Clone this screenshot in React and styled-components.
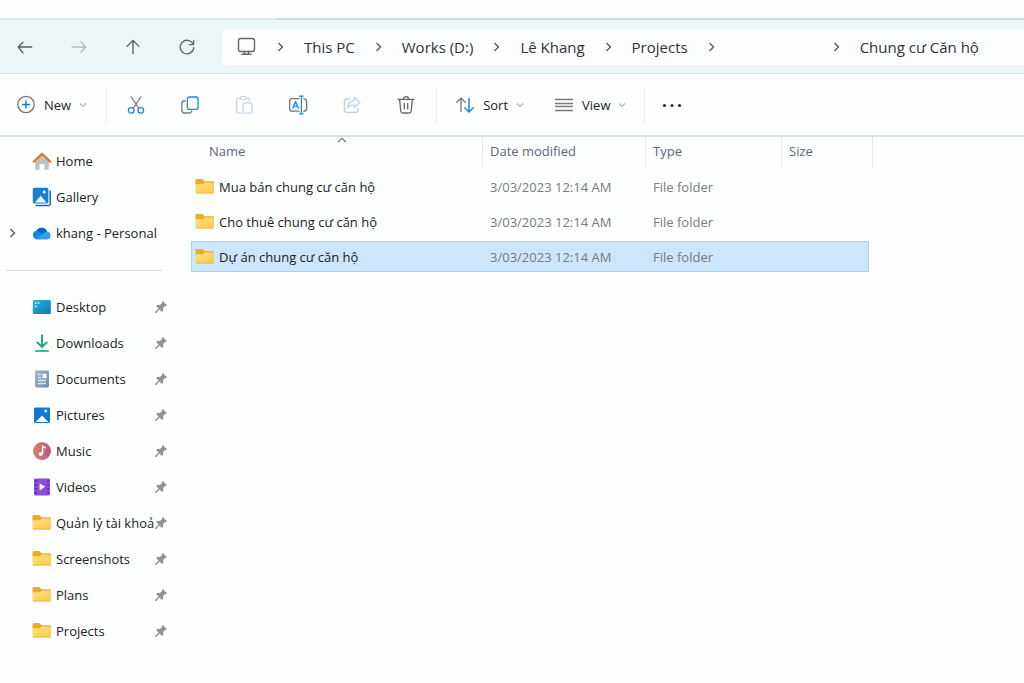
import React from 'react'
import styled, { createGlobalStyle, css } from 'styled-components'

const crumbs = ['This PC', 'Works (D:)', 'Lê Khang', 'Projects', '', 'Chung cư Căn hộ']

const files = [
    { name: 'Mua bán chung cư căn hộ', date: '3/03/2023 12:14 AM', type: 'File folder' },
    { name: 'Cho thuê chung cư căn hộ', date: '3/03/2023 12:14 AM', type: 'File folder' },
    { name: 'Dự án chung cư căn hộ', date: '3/03/2023 12:14 AM', type: 'File folder', selected: true },
]

/* ---------- icons ---------- */

const Line = ({ size = 20, children, ...rest }) => (
    <svg width={size} height={size} viewBox='0 0 20 20' fill='none' stroke='#5a5a5a' strokeWidth='1.3'
        strokeLinecap='round' strokeLinejoin='round' aria-hidden='true' {...rest}>
        {children}
    </svg>
)

const BackIcon = () => <Line><path d='M16.800 10H3.500M8 5.200 3.200 10 8 15.800' /></Line>
const ForwardIcon = () => <Line stroke='#b3bcbe'><path d='M3 10h13.500M12 5l4.800 5-4.800 5.200' /></Line>
const UpIcon = () => <Line><path d='M10 16.500V3.800M4 9.400l6-6 6 6' /></Line>
const RefreshIcon = () => <Line stroke='#666'><path d='M16 6.800A6.800 6.800 0 1 0 16.800 10.600M16.600 3.400v4.200h-4.300' /></Line>

const MonitorIcon = () => (
    <Line stroke='#666' strokeWidth='1.4'>
        <rect x='1.5' y='1.5' width='16' height='13' rx='2.2' />
        <path d='M7.500 14.500v2.400M11.500 14.500v2.400M5 17.300h9' />
    </Line>
)

const ChevronRight = () => (
    <svg width='11' height='12' viewBox='0 0 11 12' fill='none' stroke='#5c5c5c' strokeWidth='1.4' aria-hidden='true'>
        <path d='M3.500 2 7.500 6l-4 4' />
    </svg>
)

const CaretDown = () => (
    <svg width='8' height='6' viewBox='0 0 8 6' fill='none' stroke='#a8a8a8' strokeWidth='1.1' aria-hidden='true'>
        <path d='M1 1.500 4 4.300l3-2.800' />
    </svg>
)

const NewIcon = () => (
    <Line>
        <circle cx='10' cy='9.500' r='8.2' stroke='#707070' />
        <path d='M10 6v7M6.500 9.500h7' stroke='#1a7fd4' strokeWidth='1.500' />
    </Line>
)

const CutIcon = () => (
    <Line>
        <path d='M5.200 1.800 12.600 13.200' stroke='#8d7f80' />
        <path d='M14.800 1.800 7.400 13.200' stroke='#8d7f80' />
        <circle cx='5.200' cy='15.400' r='2.800' stroke='#2088d8' />
        <circle cx='14.800' cy='15.400' r='2.800' stroke='#2088d8' />
    </Line>
)

const CopyIcon = () => (
    <Line>
        <path d='M5.400 6H4.200A2.400 2.400 0 0 0 1.800 8.400v6.800a2.800 2.800 0 0 0 2.800 2.800h4.800a2.400 2.400 0 0 0 2.400-2' stroke='#6f7a85' />
        <rect x='7.400' y='2' width='10.600' height='12.400' rx='2.200' stroke='#2088d8' />
    </Line>
)

const PasteIcon = () => (
    <Line stroke='#d0d4da'>
        <path d='M6.500 3.200H4.600A1.800 1.800 0 0 0 2.800 5v11.400a1.800 1.800 0 0 0 1.800 1.800h3.200M12.500 3.200h1.300A1.800 1.800 0 0 1 15.600 5v.8' />
        <rect x='6.500' y='1.600' width='6' height='3' rx='1.400' />
        <rect x='9' y='7.800' width='9' height='10.400' rx='1.600' stroke='#c6d6ea' />
    </Line>
)

const RenameIcon = () => (
    <Line>
        <path d='M11 3.600H4.400A2.800 2.800 0 0 0 1.600 6.400v7a2.800 2.800 0 0 0 2.800 2.800H11M15.800 3.800a2.800 2.800 0 0 1 2.800 2.800v6.800a2.800 2.800 0 0 1-2.800 2.800' stroke='#6c7680' />
        <path d='M13.400 1.400v17.200M11.600 1.200h3.600M11.600 18.800h3.600' stroke='#2088d8' />
        <path d='M4.800 13.200 7.600 6.400l2.800 6.800M5.800 11.200h3.600' stroke='#2088d8' />
    </Line>
)

const ShareIcon = () => (
    <Line stroke='#c6ced3'>
        <path d='M7.500 4H5A2.600 2.600 0 0 0 2.400 6.600v8.200A2.600 2.600 0 0 0 5 17.400h8.600a2.600 2.600 0 0 0 2.600-2.600v-1.400' />
        <path d='M12.200 2.400 18 7.600l-5.800 5V9.800c-3 0-4.800.8-6.600 3 .4-4 2.600-7 6.600-7.400Z' stroke='#b3d6ec' />
    </Line>
)

const TrashIcon = () => (
    <Line stroke='#666'>
        <path d='M2 4.400h16M7.400 4.200a2.600 2.600 0 0 1 5.200 0M3.600 4.600l1.200 11.600a2 2 0 0 0 2 1.800h6.400a2 2 0 0 0 2-1.800l1.200-11.600M8.300 8.400v5.400M11.700 8.400v5.400' />
    </Line>
)

const SortIcon = () => (
    <Line>
        <path d='M6 16.500V3.200M1.800 7.200 6 3l4.200 4.200' stroke='#757575' />
        <path d='M14 3.500v13.300M9.800 12.800 14 17l4.200-4.200' stroke='#2088e0' strokeWidth='1.500' />
    </Line>
)

const ViewIcon = () => (
    <Line stroke='#7c7c7c' strokeLinecap='butt'>
        <path d='M1 4.500h18M1 8.500h18M1 11.500h18M1 15.500h18' strokeWidth='1.400' />
    </Line>
)

const MoreIcon = () => (
    <svg width='20' height='20' viewBox='0 0 20 20' fill='#2b2b2b' aria-hidden='true'>
        <circle cx='2.500' cy='10.500' r='1.600' />
        <circle cx='10' cy='10.500' r='1.600' />
        <circle cx='17.500' cy='10.500' r='1.600' />
    </svg>
)

const Glyph = ({ children }) => (
    <svg width='20' height='20' viewBox='0 0 20 20' fill='none' aria-hidden='true'>{children}</svg>
)

const FolderIcon = () => (
    <Glyph>
        <path d='M.5 3.200A1.200 1.200 0 0 1 1.700 2h5.700l2.200 2.200h8.200A1.200 1.200 0 0 1 19 5.400V9H.5Z' fill='#e9ae2a' />
        <path d='M.5 7.200H8l1.800-1.600h8A1.200 1.200 0 0 1 19 6.800v8.500a1.200 1.200 0 0 1-1.200 1.200H1.700A1.200 1.200 0 0 1 .5 15.300Z' fill='url(#folderFront)' />
        <path d='M1 16h17.500' stroke='#eebb3a' strokeWidth='1' />
    </Glyph>
)

const HomeIcon = () => (
    <Glyph>
        <path d='M3.200 9.500 10 3.600l6.800 5.900v8.300a1 1 0 0 1-1 1h-3.400v-5.800H7.600v5.800H4.200a1 1 0 0 1-1-1Z' fill='#bfc1c5' />
        <path d='m1.800 10.600 8.200-7.800 8.200 7.800' stroke='#dd7c35' strokeWidth='2.300' strokeLinecap='round' strokeLinejoin='round' />
    </Glyph>
)

const GalleryIcon = () => (
    <Glyph>
        <path d='M18.200 3.500v13.500a1.400 1.400 0 0 1-1.400 1.400H3.500' stroke='#1b69b0' strokeWidth='1.500' />
        <rect x='.8' y='.8' width='15.600' height='15.600' rx='1.600' fill='#1d7ed6' />
        <path d='m3 15.600 5.700-6.800 5.700 6.800Z' fill='#f2faff' />
        <circle cx='12.200' cy='5' r='1.500' fill='#f2faff' />
    </Glyph>
)

const CloudIcon = () => (
    <Glyph>
        <path d='M5 16.200a4.300 4.300 0 0 1-.6-8.500 6 6 0 0 1 10.800 1.100 3.800 3.800 0 0 1 .3 7.400Z' fill='#1687dc' />
        <path d='M4.400 7.700a6 6 0 0 1 10.800 1.100c-2 0-3 .8-4.200 1.700L4.400 7.700Z' fill='#0b63b8' />
        <path d='M3.300 15.900 12 10c1.600-1.200 2.500-1.300 3.400-1.200a3.800 3.800 0 0 1 .1 7.400H5a4 4 0 0 1-1.700-.3Z' fill='#2ba0ee' />
    </Glyph>
)

const DesktopIcon = () => (
    <Glyph>
        <rect x='.8' y='3' width='18' height='14' rx='1.500' fill='url(#desktopFill)' />
        <path d='M3 6h1.600M3 9.500h1.600M6 6h1.400' stroke='#dff7ff' strokeWidth='1.500' />
    </Glyph>
)

const DownloadIcon = () => (
    <Glyph>
        <path d='M10 1.500v12M4.800 9l5.200 5 5.200-5' stroke='#1aa67e' strokeWidth='1.900' />
        <path d='M3.200 18h13.600' stroke='#35b792' strokeWidth='1.900' />
    </Glyph>
)

const DocumentIcon = () => (
    <Glyph>
        <rect x='3' y='1.500' width='14' height='17' rx='1.400' fill='url(#docFill)' />
        <path d='M6 5.500h3M6 8.500h3M6 11.500h8M6 14.500h8' stroke='#dbe5f2' strokeWidth='1.300' />
        <rect x='10.500' y='4.800' width='4' height='4.400' fill='#f7faff' />
    </Glyph>
)

const PictureIcon = () => (
    <Glyph>
        <rect x='2' y='2.500' width='16' height='15.500' rx='1.400' fill='#1377cf' />
        <path d='m3.600 17 6.400-6.500 6.400 6.500Z' fill='#f5fbff' />
        <circle cx='13.800' cy='6' r='1.600' fill='#bfe4fb' />
    </Glyph>
)

const MusicIcon = () => (
    <Glyph>
        <circle cx='10' cy='10' r='9' fill='url(#musicFill)' />
        <path d='M10.600 12.800V5.200l3 1.800' stroke='#fff' strokeWidth='1.500' />
        <circle cx='8.800' cy='13' r='2' fill='#fff' />
    </Glyph>
)

const VideoIcon = () => (
    <Glyph>
        <rect x='2' y='1.500' width='16' height='17' rx='1.400' fill='#8b4be0' />
        <path d='M3.900 3v14M16.100 3v14' stroke='#5a2ca4' strokeWidth='1.700' strokeDasharray='2 2' />
        <path d='M7.600 6.200v7.200l5.800-3.600Z' fill='#f7effe' />
    </Glyph>
)

const PinIcon = () => (
    <svg width='14' height='14' viewBox='0 0 14 14' aria-hidden='true'>
        <path d='M8.600 1 13 5.200l-1.200.9-.7-.1-2 2.100.1 2.600-1.200 1.200-2.500-2.500L2 13H1v-1l3.500-3.500L2.200 6l1.200-1.200 2.600.2 2.100-2-.3-.8Z' fill='#8f9397' />
    </svg>
)

const Gradients = () => (
    <svg width='0' height='0' aria-hidden='true'>
        <defs>
            <linearGradient id='folderFront' x1='0' y1='0' x2='1' y2='1'>
                <stop offset='0' stopColor='#ffe184' />
                <stop offset='1' stopColor='#fbc94a' />
            </linearGradient>
            <linearGradient id='desktopFill' x1='0' y1='0' x2='1' y2='1'>
                <stop offset='0' stopColor='#2bb9d6' />
                <stop offset='1' stopColor='#1470b4' />
            </linearGradient>
            <linearGradient id='docFill' x1='0' y1='0' x2='1' y2='1'>
                <stop offset='0' stopColor='#a5b8d2' />
                <stop offset='1' stopColor='#6f88ae' />
            </linearGradient>
            <linearGradient id='musicFill' x1='0' y1='0' x2='1' y2='0'>
                <stop offset='0' stopColor='#e27d60' />
                <stop offset='1' stopColor='#b55a86' />
            </linearGradient>
        </defs>
    </svg>
)

const places = [
    { label: 'Home', icon: <HomeIcon /> },
    { label: 'Gallery', icon: <GalleryIcon /> },
    { label: 'khang - Personal', icon: <CloudIcon />, expandable: true },
]

const pinned = [
    { label: 'Desktop', icon: <DesktopIcon /> },
    { label: 'Downloads', icon: <DownloadIcon /> },
    { label: 'Documents', icon: <DocumentIcon /> },
    { label: 'Pictures', icon: <PictureIcon /> },
    { label: 'Music', icon: <MusicIcon /> },
    { label: 'Videos', icon: <VideoIcon /> },
    { label: 'Quản lý tài khoả', icon: <FolderIcon /> },
    { label: 'Screenshots', icon: <FolderIcon /> },
    { label: 'Plans', icon: <FolderIcon /> },
    { label: 'Projects', icon: <FolderIcon /> },
]

const App = () => {
    return (
        <Window>
            <GlobalStyle />
            <Gradients />
            <TabEdge><ActiveEdge /></TabEdge>
            <NavBar>
                <NavButtons>
                    <IconButton aria-label='Back'><BackIcon /></IconButton>
                    <IconButton aria-label='Forward' disabled><ForwardIcon /></IconButton>
                    <IconButton aria-label='Up'><UpIcon /></IconButton>
                    <IconButton aria-label='Refresh'><RefreshIcon /></IconButton>
                </NavButtons>
                <AddressBar aria-label='Address'>
                    <MonitorIcon />
                    {crumbs.map((crumb, i) => (
                        <React.Fragment key={i}>
                            <ChevronRight />
                            {crumb ? <Crumb href='#'>{crumb}</Crumb> : <BlankCrumb />}
                        </React.Fragment>
                    ))}
                </AddressBar>
            </NavBar>
            <Toolbar>
                <NewGroup>
                    <ToolButton><NewIcon />New<CaretDown /></ToolButton>
                </NewGroup>
                <IconGroup>
                    <IconButton aria-label='Cut'><CutIcon /></IconButton>
                    <IconButton aria-label='Copy'><CopyIcon /></IconButton>
                    <IconButton aria-label='Paste' disabled><PasteIcon /></IconButton>
                    <IconButton aria-label='Rename'><RenameIcon /></IconButton>
                    <IconButton aria-label='Share' disabled><ShareIcon /></IconButton>
                    <IconButton aria-label='Delete'><TrashIcon /></IconButton>
                </IconGroup>
                <ViewGroup>
                    <ToolButton><SortIcon />Sort<CaretDown /></ToolButton>
                    <ToolButton><ViewIcon />View<CaretDown /></ToolButton>
                </ViewGroup>
                <MoreGroup>
                    <IconButton aria-label='See more'><MoreIcon /></IconButton>
                </MoreGroup>
            </Toolbar>
            <Body>
                <Sidebar>
                    {places.map((p) => (
                        <SideItem key={p.label} href='#'>
                            <Expander>{p.expandable && <ChevronRight />}</Expander>
                            {p.icon}
                            <SideLabel $wide>{p.label}</SideLabel>
                        </SideItem>
                    ))}
                    <Divider />
                    {pinned.map((p) => (
                        <SideItem key={p.label} href='#'>
                            <Expander />
                            {p.icon}
                            <SideLabel>{p.label}</SideLabel>
                            <PinIcon />
                        </SideItem>
                    ))}
                </Sidebar>
                <Content>
                    <FileTable>
                        <colgroup>
                            <col width='292' />
                            <col width='163' />
                            <col width='136' />
                            <col width='87' />
                            <col width='4' />
                        </colgroup>
                        <thead>
                            <tr>
                                <HeadCell $first>
                                    Name
                                    <SortMark width='10' height='6' viewBox='0 0 10 6' aria-hidden='true'>
                                        <path d='M1 5 5 1.400 9 5' fill='none' stroke='#777' strokeWidth='1.200' />
                                    </SortMark>
                                </HeadCell>
                                <HeadCell>Date modified</HeadCell>
                                <HeadCell>Type</HeadCell>
                                <HeadCell colSpan='2'>Size</HeadCell>
                            </tr>
                        </thead>
                        <tbody>
                            {files.map((file) => (
                                <FileRow key={file.name} $selected={file.selected}>
                                    <td>
                                        <FileName><FolderIcon />{file.name}</FileName>
                                    </td>
                                    <td>{file.date}</td>
                                    <td>{file.type}</td>
                                    <td></td>
                                </FileRow>
                            ))}
                        </tbody>
                    </FileTable>
                </Content>
            </Body>
        </Window>
    )
}

const GlobalStyle = createGlobalStyle`
* { box-sizing: border-box; }
body {
    margin: 0;
    background: #fdfefe;
}
button {
    font: inherit;
    color: inherit;
    background: none;
    border: 0;
    padding: 0;
}
a { color: inherit; text-decoration: none; }
svg { flex: none; display: block; }
`

const Window = styled.div`
min-height: 100vh;
display: flex;
flex-direction: column;
font-family: "Open Sans", "Noto Sans", sans-serif;
font-size: 13px;
color: #222;
background: #fdfefe;
`

const TabEdge = styled.div`
display: flex;
justify-content: flex-end;
height: 20px;
border-bottom: 2px solid #dfe9ea;
`

const ActiveEdge = styled.div`
width: 73%;
height: 20px;
border-bottom: 2px solid #c8dad9;
`

const NavBar = styled.header`
display: flex;
align-items: center;
height: 54px;
padding-left: 10px;
background: #ecf5f7;
border-bottom: 1px solid #d9e2e5;
`

const NavButtons = styled.div`
display: flex;
gap: 24px;
margin-right: 20px;
`

const AddressBar = styled.nav`
flex: 1;
display: flex;
align-items: center;
gap: 18px;
height: 36px;
padding-left: 15px;
font-size: 15px;
color: #333;
background: #fbfdfe;
border-radius: 4px 0 0 4px;
`

const Crumb = styled.a`
white-space: nowrap;
`

const BlankCrumb = styled.span`
width: 78px;
`

const Toolbar = styled.div`
display: flex;
align-items: center;
height: 63px;
border-bottom: 2px solid #d9e4e2;
`

const group = css`
display: flex;
align-items: center;
height: 36px;
border-right: 1px solid #eaeeef;
`

const NewGroup = styled.div`
${group}
padding: 0 19px 0 16px;
`

const IconGroup = styled.div`
${group}
gap: 24px;
padding: 0 15px 0 14px;
`

const ViewGroup = styled.div`
${group}
gap: 30px;
padding: 0 18px;
`

const MoreGroup = styled.div`
padding-left: 12px;
`

const ToolButton = styled.button`
display: flex;
align-items: center;
gap: 8px;
height: 30px;
`

const IconButton = styled.button`
display: flex;
align-items: center;
justify-content: center;
width: 30px;
height: 30px;
`

const Body = styled.main`
flex: 1;
display: flex;
`

const Sidebar = styled.nav`
width: 191px;
flex: none;
padding-top: 6px;
`

const SideItem = styled.a`
display: flex;
align-items: center;
height: 36px;
padding-left: 6px;
`

const Expander = styled.span`
width: 26px;
padding-left: 1px;
`

const SideLabel = styled.span`
width: ${props => props.$wide ? '120px' : '98px'};
margin-left: 4px;
overflow: hidden;
white-space: nowrap;
`

const Divider = styled.hr`
width: 156px;
height: 1px;
margin: 19px 0 18px 6px;
border: 0;
background: #d6d9db;
`

const Content = styled.section`
flex: 1;
`

const FileTable = styled.table`
table-layout: fixed;
width: 682px;
border-spacing: 0 4px;
margin-top: -4px;
`

const HeadCell = styled.th`
position: relative;
height: 30px;
padding: 0 0 2px ${props => props.$first ? '18px' : '7px'};
text-align: left;
font-weight: 400;
color: #5b6878;
border-right: 1px solid #e3e7e9;
`

const SortMark = styled.svg`
position: absolute;
top: 0;
left: 50%;
`

const FileRow = styled.tr`
td {
    height: 31px;
    padding: 0 0 0 7px;
    color: #777b80;
    border: 0 solid #a9d2ef;
    ${props => props.$selected && css`
        background: #cbe6fd;
        border-width: 1px 0;
    `}
}
td:first-child {
    padding-left: ${props => props.$selected ? '3px' : '4px'};
    border-left-width: ${props => props.$selected ? '1px' : '0'};
}
td:last-child {
    border-right-width: ${props => props.$selected ? '1px' : '0'};
}
`

const FileName = styled.span`
display: flex;
align-items: center;
gap: 4px;
color: #1c1c1c;
`

export default App
